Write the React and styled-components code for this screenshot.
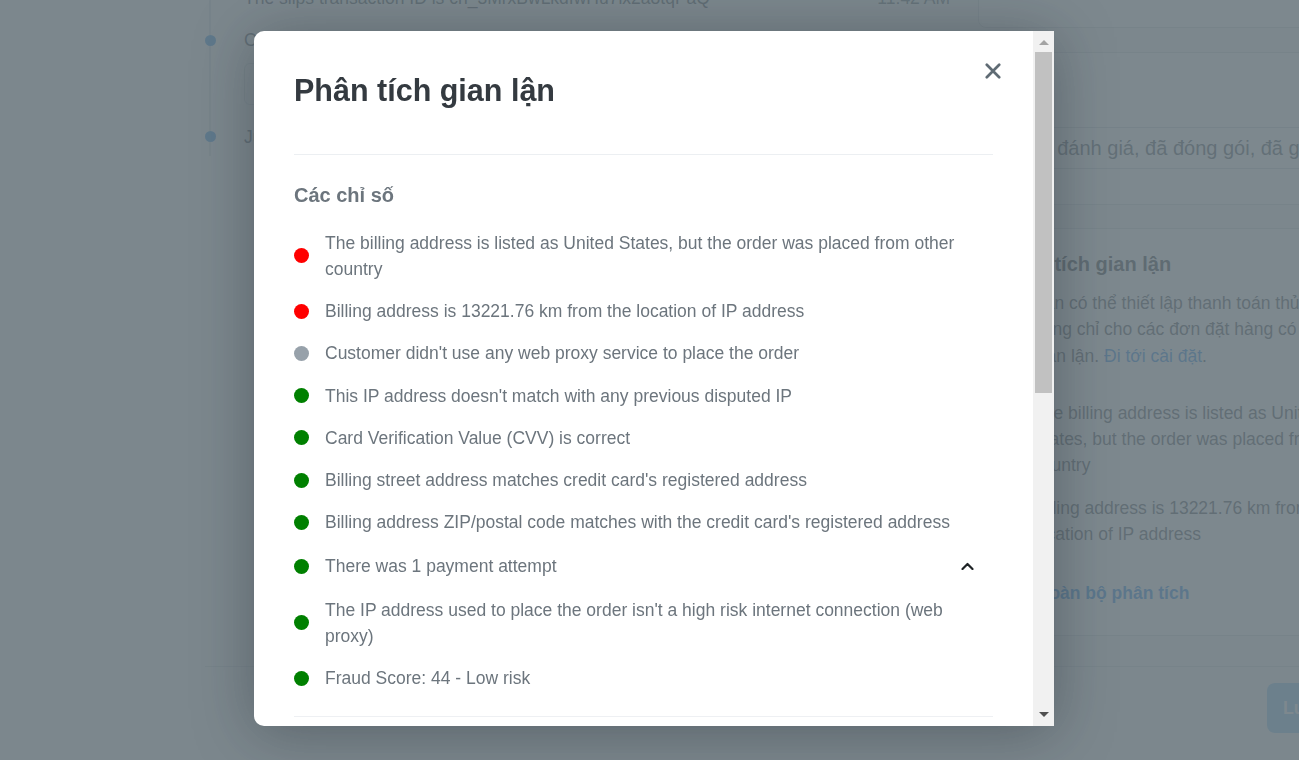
import React from "react";
import styled, { createGlobalStyle } from "styled-components";

const GlobalStyle = createGlobalStyle`
  * { box-sizing: border-box; }
  html, body { margin: 0; padding: 0; }
  body {
    width: 1299px;
    height: 760px;
    overflow: hidden;
    background: #f5f6f7;
    font-family: "Liberation Sans", Arial, sans-serif;
    color: #2c3440;
  }
`;

/* ---------- background page ---------- */

const Page = styled.div`
  display: grid;
  grid-template-columns: 978px 416px;
  width: 1394px;
  margin-top: -60px;
`;

const Main = styled.main`
  padding: 45px 28px 0 209px;
`;

const Timeline = styled.ul`
  list-style: none;
  margin: 0;
  padding: 0 0 6px 33px;
  border-left: 2px solid #d5dade;
  display: flex;
  flex-direction: column;
  gap: 16px;
`;

const TimelineItem = styled.li`
  position: relative;
  font-size: 17.5px;
  line-height: 26.25px;
  color: #3a4450;
`;

const TimelineDot = styled.span`
  position: absolute;
  left: -39.5px;
  top: 7.6px;
  width: 11px;
  height: 11px;
  border-radius: 50%;
  background: #2f8fe0;
`;

const EventRow = styled.div`
  display: flex;
  justify-content: space-between;
  white-space: nowrap;
`;

const EventTime = styled.span`
  color: #5c6670;
`;

const Bubble = styled.div`
  margin: 9px 0 3px;
  height: 42px;
  width: 420px;
  border: 1px solid #cdd3d8;
  border-radius: 6px;
  padding: 0 12px;
  display: flex;
  align-items: center;
`;

const Side = styled.aside`
  display: flex;
  flex-direction: column;
`;

const Card = styled.section`
  background: #fff;
  border: 1px solid #d3d8dc;
  border-radius: 8px;
  margin-top: ${(p) => p.$gap || 0}px;
  padding: ${(p) => p.$pad};
  height: ${(p) => (p.$h ? `${p.$h}px` : "auto")};
`;

const CardTitle = styled.h3`
  margin: 0 0 ${(p) => p.$mb || 0}px;
  font-size: 20px;
  line-height: 24px;
  font-weight: 700;
  color: #2b333b;
`;

const TagInput = styled.div`
  height: 42px;
  border: 1px solid #cdd3d8;
  border-radius: 6px;
  padding: 0 12px;
  display: flex;
  align-items: center;
  font-size: 20px;
  white-space: nowrap;
  overflow: hidden;
  color: #4a545e;
`;

const SideText = styled.p`
  margin: 0;
  padding-left: 33px;
  width: 373px;
  font-size: 17.5px;
  line-height: 26.25px;
  color: #3f4851;
`;

const SideLink = styled.a`
  color: #1583e6;
  text-decoration: none;
`;

const SideList = styled.ul`
  list-style: none;
  margin: 31px 0 0;
  padding: 0;
  display: flex;
  flex-direction: column;
  gap: 16px;
`;

const SideItem = styled.li`
  display: flex;
  gap: 18px;
  font-size: 17.5px;
  line-height: 26.25px;
  color: #3f4851;
  & > span:last-child { width: 340px; }
`;

const SideDot = styled.span`
  flex: none;
  width: 15px;
  height: 15px;
  margin-top: 5.6px;
  border-radius: 50%;
  background: ${(p) => p.$c};
`;

const AllAnalysis = styled.a`
  display: block;
  margin: 34px 0 0 40px;
  font-size: 17.5px;
  line-height: 24px;
  font-weight: 700;
  color: #1583e6;
  text-decoration: none;
`;

const Footer = styled.footer`
  grid-column: 1 / -1;
  margin: 30px 0 0 205px;
  border-top: 1px solid #d3d8dc;
  padding: 16px 61px 0 0;
  display: flex;
  justify-content: flex-end;
`;

const SaveButton = styled.button`
  height: 50px;
  padding: 0 16px;
  border: none;
  border-radius: 8px;
  background: #86c3f0;
  color: #fff;
  font-family: inherit;
  font-size: 17.5px;
  font-weight: 700;
`;

/* ---------- modal ---------- */

const Overlay = styled.div`
  position: fixed;
  inset: 0;
  background: rgba(104, 117, 123, 0.86);
  display: flex;
  align-items: flex-start;
  padding: 31px 0 0 254px;
`;

const Modal = styled.div`
  display: flex;
  width: 800px;
  height: 695px;
  background: #fff;
  border-radius: 10px 0 0 10px;
  overflow: hidden;
  box-shadow: 0 6px 60px rgba(20, 30, 38, 0.35);
`;

const ModalContent = styled.div`
  position: relative;
  flex: 1;
  min-width: 0;
  overflow: hidden;
  padding: 0 40px;
`;

const ScrollRail = styled.div`
  flex: none;
  width: 21px;
  display: flex;
  flex-direction: column;
  background: #f1f1f1;
`;

const ScrollArrow = styled.div`
  flex: none;
  height: 21px;
  display: flex;
  align-items: center;
  justify-content: center;
  padding-top: ${(p) => (p.$up ? "1px" : "0")};
  padding-bottom: ${(p) => (p.$up ? "0" : "3px")};
`;

const ScrollTrack = styled.div`
  flex: 1;
  padding: 0 2px;
`;

const ScrollThumb = styled.div`
  height: 341px;
  background: #c1c1c1;
`;

const ModalHeader = styled.header`
  padding: 41px 0 45px;
  border-bottom: 1px solid #eceff2;
`;

const Title = styled.h2`
  margin: 0;
  font-size: 30.5px;
  line-height: 36.6px;
  font-weight: 700;
  color: #343a40;
`;

const CloseButton = styled.button`
  position: absolute;
  top: 30px;
  right: 30px;
  width: 20px;
  height: 20px;
  padding: 0;
  border: none;
  background: transparent;
  display: flex;
  align-items: center;
  justify-content: center;
  cursor: pointer;
`;

const Section = styled.section`
  padding: 28px 0 25px;
  border-bottom: 1px solid #eef0f3;
`;

const SectionTitle = styled.h3`
  margin: 0 0 23px;
  font-size: 20px;
  line-height: 24px;
  font-weight: 700;
  color: #6c757d;
`;

const IndicatorList = styled.ul`
  list-style: none;
  margin: 0;
  padding: 0;
  display: flex;
  flex-direction: column;
  gap: 16px;
`;

const Indicator = styled.li`
  display: flex;
  align-items: center;
  gap: 16px;
`;

const StatusDot = styled.span`
  flex: none;
  width: 15px;
  height: 15px;
  border-radius: 50%;
  background: ${(p) => p.$color};
`;

const IndicatorText = styled.span`
  flex: 1;
  font-size: 17.5px;
  line-height: 26.25px;
  color: #6c757d;
`;

const Toggle = styled.button`
  flex: none;
  width: 14px;
  height: 29px;
  margin-right: 19px;
  padding: 0;
  border: none;
  background: transparent;
  display: flex;
  align-items: center;
  justify-content: center;
`;

const DetailRow = styled.div`
  display: flex;
  justify-content: space-between;
  font-size: 17.5px;
  line-height: 26.25px;
  color: #6c757d;
  padding: 8px 0;
`;

const COLORS = { red: "#ff0000", gray: "#97a1aa", green: "#008000" };

const indicators = [
  { c: "red", t: "The billing address is listed as United States, but the order was placed from other country" },
  { c: "red", t: "Billing address is 13221.76 km from the location of IP address" },
  { c: "gray", t: "Customer didn't use any web proxy service to place the order" },
  { c: "green", t: "This IP address doesn't match with any previous disputed IP" },
  { c: "green", t: "Card Verification Value (CVV) is correct" },
  { c: "green", t: "Billing street address matches credit card's registered address" },
  { c: "green", t: "Billing address ZIP/postal code matches with the credit card's registered address" },
  { c: "green", t: "There was 1 payment attempt", toggle: true },
  { c: "green", t: "The IP address used to place the order isn't a high risk internet connection (web proxy)" },
  { c: "green", t: "Fraud Score: 44 - Low risk" },
];

const CloseIcon = () => (
  <svg width="16" height="16" viewBox="0 0 16 16" aria-hidden="true">
    <path d="M1.8 1.8 L14.2 14.2 M14.2 1.8 L1.8 14.2" stroke="#5f6b74" strokeWidth="2.7" strokeLinecap="round" fill="none" />
  </svg>
);

const ChevronUp = () => (
  <svg width="13" height="8" viewBox="0 0 13 8" aria-hidden="true">
    <polyline points="1.5,7 6.5,2 11.5,7" stroke="#1f2326" strokeWidth="2.2" fill="none" strokeLinecap="round" strokeLinejoin="round" />
  </svg>
);

const ArrowUp = () => (
  <svg width="10" height="5" viewBox="0 0 10 5" aria-hidden="true">
    <polygon points="0,5 5,0 10,5" fill="#a3a3a3" />
  </svg>
);

const ArrowDown = () => (
  <svg width="10" height="5" viewBox="0 0 10 5" aria-hidden="true">
    <polygon points="0,0 10,0 5,5" fill="#505050" />
  </svg>
);

export default function App() {
  return (
    <>
      <GlobalStyle />
      <Page>
        <Main>
          <Timeline>
            <TimelineItem>
              <EventRow>
                <span>The slips transaction ID is ch_3MrxBwLkdIwHu7ix2a8tqPaQ</span>
                <EventTime>11:42 AM</EventTime>
              </EventRow>
            </TimelineItem>
            <TimelineItem>
              <TimelineDot />
              <span>Cảm ơn quý khách đã đặt hàng</span>
              <Bubble>Đơn hàng đã được xác nhận</Bubble>
            </TimelineItem>
            <TimelineItem>
              <TimelineDot />
              <span>Jul 12, 2023</span>
            </TimelineItem>
          </Timeline>
        </Main>

        <Side>
          <Card $h={88} $pad="20px 20px 20px 21px">
            <CardTitle>Ghi chú</CardTitle>
          </Card>
          <Card $gap={24} $pad="20px 20px 35px 21px">
            <CardTitle $mb={30}>Thẻ</CardTitle>
            <TagInput>Chờ đánh giá, đã đóng gói, đã giao hàng</TagInput>
          </Card>
          <Card $gap={23} $pad="23px 20px 30px 21px">
            <CardTitle $mb={14}>Phân tích gian lận</CardTitle>
            <SideText>
              Bạn có thể thiết lập thanh toán thủ công dùng chỉ cho các đơn đặt hàng có nguy cơ gian lận.{" "}
              <SideLink href="#">Đi tới cài đặt</SideLink>.
            </SideText>
            <SideList>
              <SideItem>
                <SideDot $c="#ff0000" />
                <span>The billing address is listed as United States, but the order was placed from other country</span>
              </SideItem>
              <SideItem>
                <SideDot $c="#ff0000" />
                <span>Billing address is 13221.76 km from the location of IP address</span>
              </SideItem>
            </SideList>
            <AllAnalysis href="#">Toàn bộ phân tích</AllAnalysis>
          </Card>
        </Side>

        <Footer>
          <SaveButton>Lưu</SaveButton>
        </Footer>
      </Page>

      <Overlay>
        <Modal role="dialog" aria-label="Phân tích gian lận">
          <ModalContent>
            <CloseButton aria-label="Đóng">
              <CloseIcon />
            </CloseButton>
            <ModalHeader>
              <Title>Phân tích gian lận</Title>
            </ModalHeader>
            <Section>
              <SectionTitle>Các chỉ số</SectionTitle>
              <IndicatorList>
                {indicators.map((it, i) => (
                  <Indicator key={i}>
                    <StatusDot $color={COLORS[it.c]} />
                    <IndicatorText>{it.t}</IndicatorText>
                    {it.toggle && (
                      <Toggle aria-label="Thu gọn">
                        <ChevronUp />
                      </Toggle>
                    )}
                  </Indicator>
                ))}
              </IndicatorList>
            </Section>
            <Section>
              <SectionTitle>Thông tin chi tiết</SectionTitle>
              <DetailRow><span>Địa chỉ IP</span><span>203.113.152.10</span></DetailRow>
              <DetailRow><span>Quốc gia của IP</span><span>Vietnam</span></DetailRow>
            </Section>
          </ModalContent>
          <ScrollRail aria-hidden="true">
            <ScrollArrow $up>
              <ArrowUp />
            </ScrollArrow>
            <ScrollTrack>
              <ScrollThumb />
            </ScrollTrack>
            <ScrollArrow>
              <ArrowDown />
            </ScrollArrow>
          </ScrollRail>
        </Modal>
      </Overlay>
    </>
  );
}
